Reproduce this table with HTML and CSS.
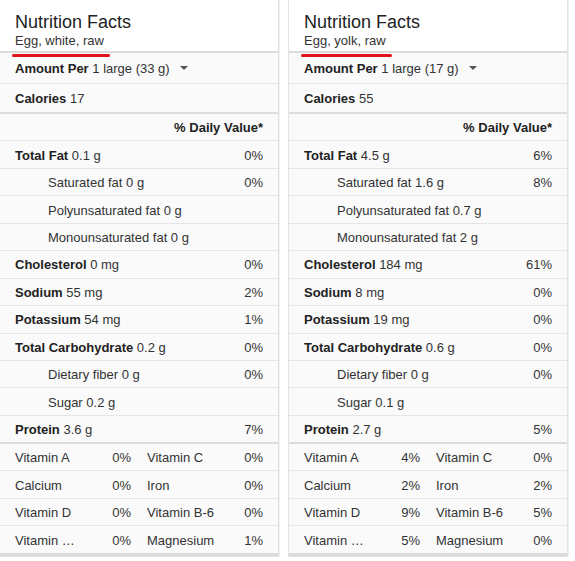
FILE: index.html
```html
<!DOCTYPE html>
<html>
<head>
<meta charset="utf-8">
<link rel="stylesheet" href="styles.css">
</head>
<body>
<div class="cards">
  <div class="card">
    <div class="head">
      <div class="title">Nutrition Facts</div>
      <div class="sub"><span class="food">Egg, white, raw</span></div>
    </div>
    <div class="row amount"><b>Amount Per</b>&nbsp;1 large (33 g)<span class="caret"></span></div>
    <div class="row calories"><b>Calories</b>&nbsp;17</div>
    <div class="row dv"><b>% Daily Value*</b></div>
    <div class="row"><span><b>Total Fat</b> 0.1 g</span><span>0%</span></div>
    <div class="row ind"><span>Saturated fat 0 g</span><span>0%</span></div>
    <div class="row ind"><span>Polyunsaturated fat 0 g</span></div>
    <div class="row ind"><span>Monounsaturated fat 0 g</span></div>
    <div class="row"><span><b>Cholesterol</b> 0 mg</span><span>0%</span></div>
    <div class="row"><span><b>Sodium</b> 55 mg</span><span>2%</span></div>
    <div class="row"><span><b>Potassium</b> 54 mg</span><span>1%</span></div>
    <div class="row"><span><b>Total Carbohydrate</b> 0.2 g</span><span>0%</span></div>
    <div class="row ind"><span>Dietary fiber 0 g</span><span>0%</span></div>
    <div class="row ind"><span>Sugar 0.2 g</span></div>
    <div class="row protein"><span><b>Protein</b> 3.6 g</span><span>7%</span></div>
    <div class="row vit"><div class="cell"><span>Vitamin A</span><span>0%</span></div><div class="cell"><span>Vitamin C</span><span>0%</span></div></div>
    <div class="row vit"><div class="cell"><span>Calcium</span><span>0%</span></div><div class="cell"><span>Iron</span><span>0%</span></div></div>
    <div class="row vit"><div class="cell"><span>Vitamin D</span><span>0%</span></div><div class="cell"><span>Vitamin B-6</span><span>0%</span></div></div>
    <div class="row vit last"><div class="cell"><span>Vitamin …</span><span>0%</span></div><div class="cell"><span>Magnesium</span><span>1%</span></div></div>
  </div>
  <div class="card">
    <div class="head">
      <div class="title">Nutrition Facts</div>
      <div class="sub"><span class="food">Egg, yolk, raw</span></div>
    </div>
    <div class="row amount"><b>Amount Per</b>&nbsp;1 large (17 g)<span class="caret"></span></div>
    <div class="row calories"><b>Calories</b>&nbsp;55</div>
    <div class="row dv"><b>% Daily Value*</b></div>
    <div class="row"><span><b>Total Fat</b> 4.5 g</span><span>6%</span></div>
    <div class="row ind"><span>Saturated fat 1.6 g</span><span>8%</span></div>
    <div class="row ind"><span>Polyunsaturated fat 0.7 g</span></div>
    <div class="row ind"><span>Monounsaturated fat 2 g</span></div>
    <div class="row"><span><b>Cholesterol</b> 184 mg</span><span>61%</span></div>
    <div class="row"><span><b>Sodium</b> 8 mg</span><span>0%</span></div>
    <div class="row"><span><b>Potassium</b> 19 mg</span><span>0%</span></div>
    <div class="row"><span><b>Total Carbohydrate</b> 0.6 g</span><span>0%</span></div>
    <div class="row ind"><span>Dietary fiber 0 g</span><span>0%</span></div>
    <div class="row ind"><span>Sugar 0.1 g</span></div>
    <div class="row protein"><span><b>Protein</b> 2.7 g</span><span>5%</span></div>
    <div class="row vit"><div class="cell"><span>Vitamin A</span><span>4%</span></div><div class="cell"><span>Vitamin C</span><span>0%</span></div></div>
    <div class="row vit"><div class="cell"><span>Calcium</span><span>2%</span></div><div class="cell"><span>Iron</span><span>2%</span></div></div>
    <div class="row vit"><div class="cell"><span>Vitamin D</span><span>9%</span></div><div class="cell"><span>Vitamin B-6</span><span>5%</span></div></div>
    <div class="row vit last"><div class="cell"><span>Vitamin …</span><span>5%</span></div><div class="cell"><span>Magnesium</span><span>0%</span></div></div>
  </div>
</div>
</body>
</html>
```
FILE: styles.css
```css
html, body {
  margin: 0;
  padding: 0;
  background: #fff;
}
body {
  font-family: "Liberation Sans", Arial, sans-serif;
  font-size: 13px;
  color: #333;
}
b { color: #222; font-weight: bold; }
.cards {
  display: flex;
  gap: 9px;
  margin-left: -1px;
  margin-top: -1px;
}
.card {
  width: 280px;
  box-sizing: border-box;
  border: 1px solid #e2e2e2;
  background: #fafafa;
  box-shadow: 1px 0 0 #f0f0f0;
}
.head {
  background: #fff;
  padding: 11px 15px 0;
  height: 40px;
  border-bottom: 2px solid #dcdcdc;
}
.title {
  font-size: 18px;
  line-height: 22px;
  color: #222;
}
.sub {
  font-size: 13px;
  line-height: 16px;
  height: 16px;
  color: #333;
}
.food {
  position: relative;
  display: inline-block;
  vertical-align: top;
  line-height: 16px;
}
.food::after {
  content: "";
  position: absolute;
  left: -3px;
  right: -6px;
  top: 21px;
  height: 3px;
  border-radius: 2px;
  background: #e0141c;
}
.row {
  box-sizing: border-box;
  height: 27.45px;
  padding: 1px 15px 0 15px;
  border-bottom: 1px solid #e6e6e6;
  display: flex;
  align-items: center;
  justify-content: space-between;
  white-space: nowrap;
}
.row.ind { padding-left: 48px; }
.row.amount {
  height: 31px;
  padding-top: 0;
  justify-content: flex-start;
}
.row.calories {
  height: 30px;
  border-bottom: 2px solid #dedede;
  justify-content: flex-start;
}
.row.dv { justify-content: flex-end; }
.row.protein {
  height: 28px;
  border-bottom: 2px solid #dcdcdc;
}
.row.vit { height: 27.5px; }
.row.vit.last {
  height: 29.5px;
  border-bottom: 3px solid #dcdcdc;
}
.caret {
  display: inline-block;
  width: 0;
  height: 0;
  border-left: 4px solid transparent;
  border-right: 4px solid transparent;
  border-top: 4px solid #555;
  margin-left: 10px;
  margin-top: 0;
}
.row.vit {
  display: grid;
  grid-template-columns: 1fr 1fr;
  column-gap: 16px;
}
.cell {
  display: flex;
  justify-content: space-between;
  align-items: center;
}
```
